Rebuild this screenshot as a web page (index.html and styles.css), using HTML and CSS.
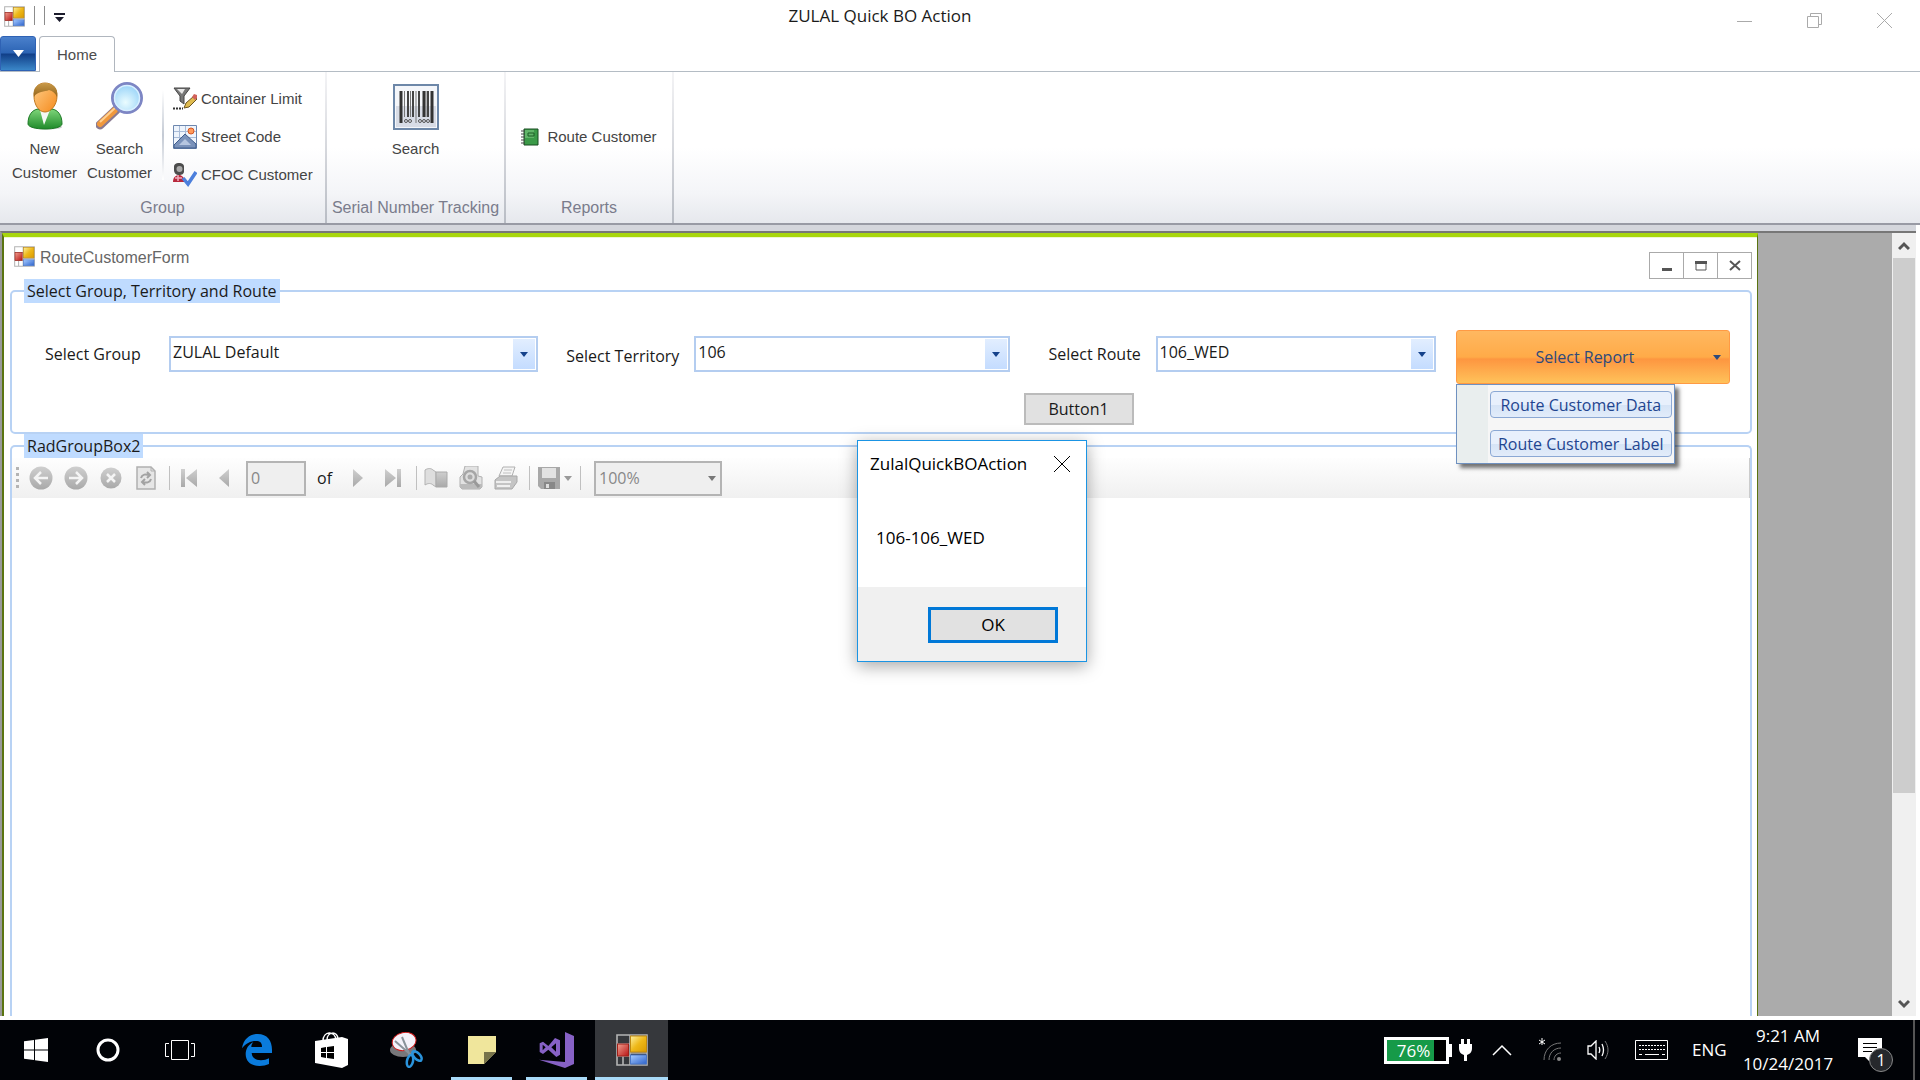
FILE: index.html
```html
<!DOCTYPE html>
<html lang="en">
<head>
<meta charset="utf-8">
<title>ZULAL Quick BO Action</title>
<link rel="stylesheet" href="styles.css">
</head>
<body>
<svg class="defs" width="0" height="0" aria-hidden="true">
  <defs>
    <linearGradient id="gold" x1="0" y1="0" x2="1" y2="1"><stop offset="0" stop-color="#fdf0a0"/><stop offset=".5" stop-color="#eeb818"/><stop offset="1" stop-color="#d99a00"/></linearGradient>
    <linearGradient id="ruby" x1="0" y1="0" x2="1" y2="1"><stop offset="0" stop-color="#f0a090"/><stop offset="1" stop-color="#b81414"/></linearGradient>
    <linearGradient id="azure" x1="0" y1="0" x2="1" y2="1"><stop offset="0" stop-color="#a8ccff"/><stop offset="1" stop-color="#2c62cc"/></linearGradient>
    <linearGradient id="grey" x1="0" y1="0" x2="0" y2="1"><stop offset="0" stop-color="#cfcfcf"/><stop offset="1" stop-color="#a9a9a9"/></linearGradient>
    <linearGradient id="face" x1="0" y1="0" x2="1" y2="1"><stop offset="0" stop-color="#ffcf8a"/><stop offset="1" stop-color="#f58a1c"/></linearGradient>
    <linearGradient id="hair" x1="0" y1="0" x2="0" y2="1"><stop offset="0" stop-color="#c99a4a"/><stop offset="1" stop-color="#94641a"/></linearGradient>
    <linearGradient id="shirt" x1="0" y1="0" x2="0" y2="1"><stop offset="0" stop-color="#7fd67a"/><stop offset="1" stop-color="#1f8a2a"/></linearGradient>
    <radialGradient id="glass" cx=".45" cy=".65" r=".6"><stop offset="0" stop-color="#eafcff"/><stop offset="1" stop-color="#9ad4f8"/></radialGradient>
    <symbol id="forms" viewBox="0 0 32 32">
      <path d="M1 1h30v30H1zM1 10h13M1 22h13M14 1v30M14 19h17M7 22v9" fill="none" stroke="#b4b4b4" stroke-width="1.6"/>
      <rect x="14.500" y="2" width="16" height="16" fill="url(#gold)" stroke="#c08a10"/>
      <rect x="1.500" y="10" width="11" height="12" fill="url(#ruby)" stroke="#a02018"/>
      <rect x="14.500" y="21" width="16" height="9" fill="url(#azure)" stroke="#4a78c8"/>
    </symbol>
    <symbol id="caret" viewBox="0 0 8 5"><path d="M0 0h8L4 5z" fill="currentColor"/></symbol>
  </defs>
</svg>

<div class="screen">
  <header class="titlebar">
    <div class="quick">
      <svg class="i20" aria-hidden="true"><use href="#forms"/></svg>
      <span class="bar"></span><span class="bar"></span>
      <button class="plain more" aria-label="Customize toolbar"><svg width="11" height="10" viewBox="0 0 11 10"><path d="M0 0h11v2H0zM1 4h9L5.500 9z" fill="#1c1c2c"/></svg></button>
    </div>
    <h1>ZULAL Quick BO Action</h1>
    <div class="winctl">
      <button class="plain" aria-label="Minimize"><svg width="16" height="16"><path d="M0 8.500h15" stroke="#aaa"/></svg></button>
      <button class="plain" aria-label="Restore"><svg width="16" height="16"><path d="M.5 3.500h11v11H.5zM3.500 3V.5h11v11H12" fill="none" stroke="#aaa"/></svg></button>
      <button class="plain" aria-label="Close"><svg width="16" height="16"><path d="M0 0l15 15M15 0L0 15" stroke="#aaa"/></svg></button>
    </div>
  </header>

  <nav class="tabs">
    <button class="appmenu" aria-label="Application menu"><svg width="11" height="7"><use href="#caret"/></svg></button>
    <button class="tab">Home</button>
  </nav>

  <section class="ribbon">
    <div class="rgroup main">
      <div class="rbody">
        <button class="big">
          <svg width="38" height="48" viewBox="0 0 38 48"><ellipse cx="21" cy="45" rx="15" ry="2.500" fill="#999" opacity=".5"/><path d="M2 42c0-9 4-14 10-15l7 4 7-4c6 1 10 6 10 15 0 3-8 5-17 5S2 45 2 42z" fill="url(#shirt)" stroke="#1d7a26"/><path d="M14 28l4 15 6-15z" fill="#f4f8f4"/><path d="M8 14C8 6 12 1 19 1s12 5 12 13c0 9-6 16-12 16S8 23 8 14z" fill="url(#face)" stroke="#c07820"/><path d="M8 15C6 6 12 1 19 1s14 4 12 14c-2-4-4-6-8-7-4 2-12 1-15 7z" fill="url(#hair)"/></svg>
          <span>New<br>Customer</span>
        </button>
        <button class="big">
          <svg width="48" height="48" viewBox="0 0 48 48"><path d="M20 28L4 43" stroke="#8a7a90" stroke-width="9" stroke-linecap="round"/><path d="M19 28L4 42" stroke="#f0983c" stroke-width="6" stroke-linecap="round"/><path d="M19 26L4 40" stroke="#ffd090" stroke-width="2"/><circle cx="31" cy="16" r="14.500" fill="url(#glass)" stroke="#7d86c4" stroke-width="3"/><circle cx="31" cy="16" r="12.500" fill="none" stroke="#d8efff" stroke-width="1.500"/></svg>
          <span>Search<br>Customer</span>
        </button>
        <span class="rsep"></span>
        <div class="smalls">
          <button class="small"><svg width="24" height="24" viewBox="0 0 24 24"><path d="M1 1h16l-6 8v8l-4-3V9z" fill="#777" stroke="#444"/><path d="M4 2h8L9 7z" fill="#e8e8e8"/><path d="M0 21.500h10" stroke="#333" stroke-width="2" stroke-dasharray="2 1"/><path d="M11 21l2-5 8-7 3 3-8 8z" fill="#e0bc50" stroke="#6b5320"/><path d="M19 10l2-3 3 1v3l-2 2z" fill="#d2625c"/></svg>Container Limit</button>
          <button class="small"><svg width="24" height="24" viewBox="0 0 24 24"><path d="M.5.500h23v23H.5z" fill="#eef4fc" stroke="#6d87ae"/><path d="M1 6.500h22M1 12.500h22M6.500 1v22M12.500 1v22" stroke="#a9bcd8"/><path d="M1 20l11-11 11 10v4H1z" fill="#7a92ba" stroke="#3f5c8c"/><path d="M6 20l6-6 6 6z" fill="#b6c6e0"/><circle cx="18" cy="6" r="3" fill="#ff9a5a" stroke="#d65522"/></svg>Street Code</button>
          <button class="small"><svg width="24" height="24" viewBox="0 0 24 24"><path d="M1 4c0-3 2-4 5-4s5 1 5 4v4c0 3-2 4-5 4S1 10 1 7z" fill="#4c4c4c"/><circle cx="6.500" cy="6" r="3" fill="#aaa"/><path d="M0 19c0-5 3-7 6-7s5 2 6 7z" fill="#b8283c"/><path d="M5 12v6M2 15h7" stroke="#eab" stroke-width="1.500"/><path d="M10 15l5 6L23 9" fill="none" stroke="#4c7fdc" stroke-width="3.500"/></svg>CFOC Customer</button>
        </div>
      </div>
      <div class="rlabel">Group</div>
    </div>
    <div class="rgroup serial">
      <div class="rbody">
        <button class="big">
          <svg width="46" height="46" viewBox="0 0 46 46"><rect x="1" y="1" width="44" height="44" fill="#f4f6fa" stroke="#6d87a8" stroke-width="2"/><path d="M3 22h40v21H3z" fill="#d8dce6"/><path d="M8 7v32M31 7v26M39 7v32" stroke="#333" stroke-width="3"/><path d="M15 7v26M20 7v26M26 7v26M35 7v26" stroke="#444" stroke-width="2"/><path d="M11.500 7v26M17.500 7v26M23 7v32M33 7v26" stroke="#777"/><g fill="none" stroke="#555"><circle cx="13" cy="37" r="1.500"/><circle cx="17" cy="37" r="1.500"/><circle cx="27" cy="37" r="1.500"/><circle cx="31" cy="37" r="1.500"/><circle cx="35" cy="37" r="1.500"/></g></svg>
          <span>Search</span>
        </button>
      </div>
      <div class="rlabel">Serial Number Tracking</div>
    </div>
    <div class="rgroup reports">
      <div class="rbody">
        <button class="small book"><svg width="18" height="18" viewBox="0 0 18 18"><path d="M3 1h14v16H3z" fill="#3b9a48" stroke="#184d20"/><path d="M4 2h9v8H4z" fill="#7cc880" opacity=".6"/><path d="M7 5h6v3H7z" fill="none" stroke="#1c5c26"/><path d="M0 3h4M0 6h4M0 9h4M0 12h4M0 15h4" stroke="#444"/></svg>Route Customer</button>
      </div>
      <div class="rlabel">Reports</div>
    </div>
  </section>

  <main class="mdi">
    <section class="form" aria-label="RouteCustomerForm">
      <header class="formbar">
        <svg class="i20" aria-hidden="true"><use href="#forms"/></svg>
        <h2>RouteCustomerForm</h2>
        <div class="formctl">
          <button aria-label="Minimize"><svg width="12" height="12"><path d="M1 8h10v3H1z" fill="#555"/></svg></button>
          <button aria-label="Maximize"><svg width="12" height="12"><path d="M1 2h10v8H1z" fill="none" stroke="#555"/><path d="M0 1h12v3H0z" fill="#555"/></svg></button>
          <button aria-label="Close"><svg width="12" height="12"><path d="M1 1l10 9M11 1L1 10" stroke="#555" stroke-width="2"/></svg></button>
        </div>
      </header>

      <fieldset class="box filters">
        <legend>Select Group, Territory and Route</legend>
        <div class="fields">
          <label for="group">Select Group</label>
          <div class="combo"><select id="group"><option>ZULAL Default</option></select><span class="drop"><svg width="8" height="5"><use href="#caret"/></svg></span></div>
          <label for="territory" class="lterr">Select Territory</label>
          <div class="combo"><select id="territory"><option>106</option></select><span class="drop"><svg width="8" height="5"><use href="#caret"/></svg></span></div>
          <label for="route" class="lroute">Select Route</label>
          <div class="combo"><select id="route"><option>106_WED</option></select><span class="drop"><svg width="8" height="5"><use href="#caret"/></svg></span></div>
          <div class="report">
            <button class="rbtn"><span>Select Report</span><svg width="8" height="5"><use href="#caret"/></svg></button>
            <div class="menu">
              <button>Route Customer Data</button>
              <button>Route Customer Label</button>
            </div>
          </div>
          <button class="button1">Button1</button>
        </div>
      </fieldset>

      <fieldset class="box viewer">
        <legend>RadGroupBox2</legend>
        <div class="toolbar">
          <span class="grip"></span>
          <button class="plain" disabled aria-label="Back"><svg width="24" height="24" viewBox="0 0 24 24"><circle cx="12" cy="12" r="11.500" fill="url(#grey)"/><path d="M19 12H7M12 6l-6 6 6 6" fill="none" stroke="#f4f4f4" stroke-width="2.500"/></svg></button>
          <button class="plain" disabled aria-label="Forward"><svg width="24" height="24" viewBox="0 0 24 24"><circle cx="12" cy="12" r="11.500" fill="url(#grey)"/><path d="M5 12h12M12 6l6 6-6 6" fill="none" stroke="#f4f4f4" stroke-width="2.500"/></svg></button>
          <button class="plain" disabled aria-label="Stop"><svg width="24" height="24" viewBox="0 0 24 24"><circle cx="12" cy="12" r="10.500" fill="url(#grey)"/><path d="M8 8l8 8M16 8l-8 8" stroke="#f4f4f4" stroke-width="2.500"/></svg></button>
          <button class="plain" disabled aria-label="Refresh"><svg width="24" height="24" viewBox="0 0 24 24"><path d="M3 1h14l4 4v18H3z" fill="#e6e6e6" stroke="#b0b0b0" stroke-width="1.500"/><path d="M17 1v4h4" fill="none" stroke="#b0b0b0"/><path d="M7 12c1-4 5-4 8-3M13 6l3 3-3 3M17 13c-1 4-5 4-8 3M11 13l-3 3 3 3" fill="none" stroke="#a2a2a2" stroke-width="2"/></svg></button>
          <span class="tsep"></span>
          <button class="plain" disabled aria-label="First page"><svg width="24" height="24" viewBox="0 0 24 24"><path d="M4 3h4v18H4zM20 3v18L9 12z" fill="url(#grey)"/></svg></button>
          <button class="plain" disabled aria-label="Previous page"><svg width="24" height="24" viewBox="0 0 24 24"><path d="M17 3v18L7 12z" fill="url(#grey)"/></svg></button>
          <input class="page" aria-label="Page" value="0" disabled>
          <span class="of">of</span>
          <button class="plain" disabled aria-label="Next page"><svg width="24" height="24" viewBox="0 0 24 24"><path d="M7 3v18l10-9z" fill="url(#grey)"/></svg></button>
          <button class="plain" disabled aria-label="Last page"><svg width="24" height="24" viewBox="0 0 24 24"><path d="M16 3h4v18h-4zM4 3v18l11-9z" fill="url(#grey)"/></svg></button>
          <span class="tsep"></span>
          <button class="plain" disabled aria-label="Document map"><svg width="24" height="24" viewBox="0 0 24 24"><path d="M1 4c3-2 6-2 8 0l3 2v15l-3-2c-2-2-5-2-8 0z" fill="#dedede" stroke="#b2b2b2"/><path d="M12 6h11v15H12z" fill="url(#grey)" stroke="#aaa"/></svg></button>
          <button class="plain" disabled aria-label="Print layout"><svg width="24" height="24" viewBox="0 0 24 24"><path d="M6 0h13v10l4 1v10l-2 2H3l-2-2V11l3-3z" fill="#e2e2e2" stroke="#b0b0b0"/><path d="M1 18h22v3l-2 2H3l-2-2z" fill="#bbb"/><circle cx="11" cy="11" r="6" fill="#ddd" stroke="#a6a6a6" stroke-width="2.500"/><circle cx="11" cy="11" r="2.500" fill="#aaa"/><path d="M15 15l5 6" stroke="#999" stroke-width="3"/></svg></button>
          <button class="plain" disabled aria-label="Print"><svg width="24" height="24" viewBox="0 0 24 24"><path d="M9 1h12l-3 9H5z" fill="#f4f4f4" stroke="#b0b0b0"/><path d="M10 4h8M9 7h8" stroke="#c0c0c0"/><path d="M1 14l5-4h17v6l-5 7H1z" fill="#c4c4c4" stroke="#a8a8a8"/><path d="M2 15h15v2H2z" fill="#eee"/><path d="M3 19h13v2H3z" fill="#f0f0f0"/></svg></button>
          <span class="tsep"></span>
          <button class="plain save" disabled aria-label="Export"><svg width="22" height="24" viewBox="0 0 22 24"><path d="M0 1h22v22H3l-3-3z" fill="#a8a8a8"/><path d="M4 2h14v10H4z" fill="#e2e2e2"/><path d="M6 16h11v7H6z" fill="#888"/><path d="M8 18h3v4H8z" fill="#ddd"/></svg><svg width="8" height="5"><use href="#caret"/></svg></button>
          <span class="tsep"></span>
          <div class="zoom"><select aria-label="Zoom" disabled><option>100%</option></select><svg width="8" height="5"><use href="#caret"/></svg></div>
        </div>
      </fieldset>
    </section>
    <div class="vscroll">
      <button class="plain" aria-label="Scroll up"><svg width="12" height="10"><path d="M1 8l5-5 5 5" fill="none" stroke="#555" stroke-width="3"/></svg></button>
      <div class="track"><div class="thumb"></div></div>
      <button class="plain" aria-label="Scroll down"><svg width="12" height="10"><path d="M1 2l5 5 5-5" fill="none" stroke="#555" stroke-width="3"/></svg></button>
    </div>
  </main>

  <footer class="taskbar">
    <div class="sys">
      <button class="plain" aria-label="Start"><svg width="24" height="24" viewBox="0 0 24 24"><path d="M0 3.300L10 2v9.500H0zM11 1.800L24 0v11.500H11zM0 12.500h10V22L0 20.700zM11 12.500h13V24l-13-1.800z" fill="#fff"/></svg></button>
      <button class="plain" aria-label="Cortana"><svg width="24" height="24"><circle cx="12" cy="12" r="10" fill="none" stroke="#fff" stroke-width="3"/></svg></button>
      <button class="plain" aria-label="Task view"><svg width="30" height="20"><path d="M6.500.500h17v19h-17zM4 3.500H.5v13H4M26 3.500h3.500v13H26" fill="none" stroke="#fff"/></svg></button>
    </div>
    <div class="apps">
      <button class="plain" aria-label="Edge"><svg width="30" height="32" viewBox="0 0 90 96"><path d="M0 43C4 15 24 0 47 0c29 0 43 20 43 47v10H29c1 15 13 22 28 22 9 0 17-2 24-6v17c-8 4-18 6-28 6-26 0-42-14-42-36 0-16 9-29 23-35-4 4-6 9-6 14h32c0-13-6-18-18-18C25 21 10 29 0 43z" fill="#0a7bdc"/></svg></button>
      <button class="plain" aria-label="Store"><svg width="33" height="36" viewBox="0 0 33 36"><path d="M8 9c0-10 12-11 13-1M12 8c0-9 11-9 11-1" fill="none" stroke="#fff" stroke-width="1.500"/><path d="M0 9l27-4 6 2v26l-6 3-27-5z" fill="#fff"/><path d="M6 16l5-1v5H6zM12 15l7-1v6h-7zM6 21h5v5l-5-1zM12 21h7v6l-7-1z" fill="#000"/></svg></button>
      <button class="plain" aria-label="Snipping Tool"><svg width="34" height="36" viewBox="0 0 34 36"><ellipse cx="13" cy="18" rx="13" ry="7" fill="#77777a"/><ellipse cx="14" cy="9.500" rx="12" ry="9" transform="rotate(-12 14 9)" fill="#f4f2fa" stroke="#d01c1c"/><path d="M5 9l16 14M12 5l8 19" stroke="#8a929a" stroke-width="2"/><g fill="none" stroke="#2a94dc" stroke-width="2.500"><ellipse cx="27" cy="24" rx="3" ry="6" transform="rotate(-45 27 24)"/><ellipse cx="20" cy="29" rx="3" ry="6" transform="rotate(12 20 29)"/></g></svg></button>
      <button class="plain open" aria-label="Sticky Notes"><svg width="28" height="28"><path d="M0 0h28v16L16 28H0z" fill="#f0e69c"/><path d="M16 28V16h12z" fill="#77734a"/></svg></button>
      <button class="plain open" aria-label="Visual Studio"><svg width="35" height="36" viewBox="0 0 105 108"><path d="M78 0l27 12v84l-27 12L0 83l78 7z" fill="#8661c5"/><path fill-rule="evenodd" d="M2 34l10-5 16 13 20-24 15 7v43l-11 7-24-22-16 13-10-6zM11 38v17l9-9zM51 34L37 46l14 13z" fill="#8661c5"/></svg></button>
      <button class="plain open active" aria-label="ZULAL Quick BO Action"><svg width="32" height="32"><use href="#forms"/></svg></button>
    </div>
    <div class="tray">
      <div class="battery"><span>76%</span></div>
      <svg class="plug" width="13" height="22" viewBox="0 0 13 22"><path d="M2 0h3v5h3V0h3v5h2v4c0 4-2 6-5 7v6H5v-6c-3-1-5-3-5-7V5h2z" fill="#fff"/></svg>
      <svg class="chev" width="20" height="12"><path d="M1 11l9-9 9 9" fill="none" stroke="#fff" stroke-width="1.500"/></svg>
      <svg class="wifi" width="24" height="24" viewBox="0 0 24 24"><path d="M4 0v7M1 2l6 4M7 2L1 6" stroke="#fff"/><g fill="none" stroke="#777"><path d="M6 22C6 12 13 5 23 5M11 22c0-7 5-12 12-12M16 22c0-4 3-7 7-7"/></g><circle cx="21" cy="21" r="2" fill="#888"/></svg>
      <svg class="vol" width="23" height="20" viewBox="0 0 23 20"><g fill="none" stroke="#fff" stroke-width="1.300"><path d="M1 6h3l5-5v18l-5-5H1zM12 7c1 2 1 4 0 6M15 4c2 4 2 8 0 12"/></g><path d="M18 1c4 6 4 12 0 18" fill="none" stroke="#777"/></svg>
      <svg class="kbd" width="33" height="20"><path d="M.5.500h32v19H.5z" fill="none" stroke="#fff"/><path d="M4 5.500h26M4 9.500h26" stroke="#fff" stroke-dasharray="2 1"/><path d="M4 14.500h3m3 0h14m3 0h3" stroke="#fff"/></svg>
      <span class="lang">ENG</span>
      <div class="clock"><span>9:21 AM</span><span>10/24/2017</span></div>
      <div class="notes"><svg width="24" height="24"><path d="M0 0h24v19H15l-4 4-4-4H0z" fill="#fff"/><path d="M5 5.500h14M5 9.500h14M5 13.500h9" stroke="#000"/></svg><span class="badge">1</span></div>
      <span class="peek"></span>
    </div>
  </footer>

  <div class="dialog" role="dialog" aria-labelledby="dlg">
    <header><h2 id="dlg">ZulalQuickBOAction</h2><button class="plain" aria-label="Close"><svg width="16" height="16"><path d="M0 0l16 16M16 0L0 16" stroke="#000"/></svg></button></header>
    <p>106-106_WED</p>
    <footer><button class="ok">OK</button></footer>
  </div>
</div>
</body>
</html>
```
FILE: styles.css
```css
* { box-sizing: border-box; }
body { margin: 0; background: #fff; color: #1a1a1a; font: 16px/20px "Open Sans", "Noto Sans", sans-serif; }
h1, h2, p, fieldset { margin: 0; padding: 0; font-weight: 400; }
button, input, select { font: inherit; color: inherit; margin: 0; padding: 0; border-radius: 0; }
svg { display: block; flex: none; }
.defs { position: absolute; }
.plain { display: flex; align-items: center; justify-content: center; border: 0; background: none; }
.i20 { width: 21px; height: 21px; }

.screen { display: flex; flex-direction: column; height: 100vh; position: relative; overflow: hidden; }

/* Title bar */
.titlebar { display: flex; height: 36px; flex: none; }
.quick { display: flex; align-items: flex-start; gap: 9px; width: 64px; padding: 6px 0 0 4px; }
.quick .bar { width: 1px; height: 19px; background: #8c8c8c; flex: none; }
.more { margin-top: 7px; }
.titlebar h1 { flex: 1; font-size: 17px; line-height: 32px; text-align: center; padding-right: 14px; }
.winctl { display: flex; }
.winctl button { width: 70px; height: 36px; padding-top: 6px; }

/* Ribbon */
.tabs { display: flex; align-items: flex-end; gap: 3px; height: 36px; flex: none; border-bottom: 1px solid #b4bcc4; font: 15px/20px "Liberation Sans", Arial, sans-serif; }
.appmenu { display: flex; align-items: center; justify-content: center; width: 36px; height: 35px; border: 1px solid #2f62b4; border-radius: 3px 3px 0 0; color: #fff; background: linear-gradient(#4a80cc, #2c64b4 48%, #113f88 52%, #3a86c8); }
.tab { width: 76px; height: 36px; margin-bottom: -1px; border: 1px solid #b0b6be; border-bottom: 0; border-radius: 4px 4px 0 0; background: #fff; color: #4c4c4c; }
.ribbon { display: flex; height: 153px; flex: none; border-bottom: 2px solid #989aa4; background: linear-gradient(#fff 50%, #f4f5f8 80%, #e6e8ed); font: 15px/24px "Liberation Sans", Arial, sans-serif; color: #444; }
.ribbon button { border: 0; background: none; }
.rgroup { display: flex; flex-direction: column; border-right: 2px solid; border-image: linear-gradient(#f4f4f6, #b8bcc4) 1; }
.main { width: 327px; }
.serial { width: 179px; }
.reports { width: 168px; }
.rbody { flex: 1; display: flex; justify-content: center; padding-top: 10px; }
.main .rbody { justify-content: flex-start; padding-left: 7px; }
.big { display: flex; flex-direction: column; align-items: center; width: 75px; height: 110px; gap: 7px; }
.serial .big { padding-top: 2px; width: auto; }
.rsep { width: 2px; height: 90px; margin: 8px 9px 0 5px; background: linear-gradient(#fff, #c4cad4, #fff); }
.smalls { display: flex; flex-direction: column; gap: 14px; padding-top: 5px; }
.small { display: flex; align-items: center; gap: 4px; height: 24px; white-space: nowrap; }
.book { gap: 8px; margin-top: 43px; }
.rlabel { height: 28px; text-align: center; color: #7a7c8c; font-size: 16px; line-height: 26px; white-space: nowrap; }

/* MDI client */
.mdi { flex: 1; min-height: 0; display: flex; margin: 6px 4px 4px 0; background: #ababab; border-top: 2px solid #777; border-left: 2px solid #999; box-shadow: 0 -6px 0 #d4d6dc; }
.form { flex: 1; min-width: 0; display: flex; flex-direction: column; margin-right: 134px; padding: 0 5px 0 6px; border: 1px solid #5a7410; border-top: 4px solid #a8d60c; border-bottom: 0; border-left: 2px solid #5a7410; background: #fff; box-shadow: inset 0 1px #eef6d0; }
.formbar { display: flex; gap: 5px; height: 42px; flex: none; padding: 9px 0 0 4px; font: 16px/23px "Liberation Sans", Arial, sans-serif; color: #666; }
.formbar h2 { font-size: 16px; line-height: 24px; flex: 1; }
.formctl { display: flex; margin-top: 6px; }
.formctl button { display: flex; align-items: center; justify-content: center; width: 35px; height: 27px; border: 1px solid #aaa; background: #fff; }
.formctl button + button { margin-left: -1px; }
.box { min-width: 0; border: 2px solid #b8d2f4; border-radius: 5px; }
.box legend { height: 24px; margin-left: 12px; padding: 0 3px; line-height: 24px; background: #bfdbff; }
.filters { height: 155px; flex: none; }
.viewer { flex: 1; border-bottom: 0; border-radius: 5px 5px 0 0; }

.fields { display: grid; grid-template-columns: 124px 369fr 156px 315fr 146px 280fr 294fr; grid-template-rows: 54px 32px; row-gap: 9px; align-items: center; padding: 27px 20px 0 33px; }
.fields label, .combo { margin-bottom: 6px; }
.lterr { padding: 4px 0 0 28px; }
.lroute { padding-left: 39px; }
.combo { position: relative; }
.combo select { display: block; appearance: none; width: 100%; height: 36px; border: 2px solid #b4cdf0; background: #fff; padding: 0 30px 5px 2px; opacity: 1; }
.drop { position: absolute; top: 3px; right: 3px; bottom: 3px; width: 22px; display: flex; align-items: center; justify-content: center; background: linear-gradient(#e2eeff, #c4dcff); color: #15428b; pointer-events: none; }
.report { position: relative; margin-left: 20px; }
.rbtn { display: flex; align-items: center; width: 100%; height: 54px; padding-right: 8px; border: 1px solid #ff9a44; border-radius: 3px; color: #2d4a7c; background: linear-gradient(#ffb860, #ffab48 50%, #fd9640 54%, #ffc25a); }
.rbtn span { flex: 1; text-align: center; }
.menu { position: absolute; top: 54px; left: 0; width: 219px; display: flex; flex-direction: column; gap: 12px; padding: 6px 2px 6px 33px; border: 1px solid #6f91c0; background: linear-gradient(90deg, #e9eeee 31px, #f6f6f6 31px); box-shadow: 4px 4px 4px rgba(0,0,0,.55); z-index: 1; }
.menu button { height: 27px; border: 1px solid #8ba8d4; border-radius: 4px; color: #1f4590; background: linear-gradient(#e8f0fc 50%, #d6e4f6 52%, #e2ecfa); white-space: nowrap; }
.button1 { grid-column: 5 / span 2; grid-row: 2; width: 110px; height: 32px; margin-left: 14px; border: 2px solid #bbb; background: #e1e1e1; }

/* Report viewer toolbar */
.toolbar { display: flex; align-items: center; height: 40px; padding-left: 4px; background: linear-gradient(#fefefe, #f0f0f0); border-right: 1px solid #ccc; color: #999; }
.toolbar button { width: 35px; height: 30px; }
.grip { width: 3px; height: 22px; background: repeating-linear-gradient(#b4b4b4 0 3px, transparent 3px 6px); margin-right: 4px; }
.tsep { width: 1px; height: 24px; margin: 0 1px 0 6px; background: #c0c0c0; }
.page { width: 60px; height: 35px; margin: 0 11px 0 5px; padding: 0 3px; border: 2px solid #b4b4b4; background: #efefef; color: #888; }
.of { width: 16px; margin-right: 7px; color: #1a1a1a; }
.toolbar .save { width: 35px; gap: 4px; margin: 0 2px 0 6px; }
.zoom { position: relative; margin-left: 12px; }
.zoom select { display: block; appearance: none; width: 128px; height: 35px; padding: 0 3px; border: 2px solid #b4b4b4; background: #efefef; color: #888; opacity: 1; }
.zoom svg { position: absolute; right: 6px; top: 15px; color: #777; }

.vscroll { display: flex; flex-direction: column; width: 24px; background: #f0f0f0; }
.vscroll button { height: 25px; flex: none; }
.track { flex: 1; padding: 0 1px; }
.thumb { height: 73%; background: #cdcdcd; }

/* Taskbar */
.taskbar { display: flex; height: 60px; flex: none; background: #010307; color: #fff; }
.sys, .apps { display: flex; }
.sys { margin-right: 3px; }
.sys button { width: 72px; }
.apps button { width: 75px; }
.open { background: linear-gradient(#a8daf8, #a8daf8) 7px 57px / 61px 3px no-repeat; }
.apps .active { width: 73px; margin: 0 1px; background: linear-gradient(#a8daf8, #a8daf8) 0 57px / 73px 3px no-repeat #36383c; }
.tray { display: flex; align-items: center; margin-left: auto; font-size: 17px; }
.battery { position: relative; width: 65px; height: 27px; border: 3px solid #fff; background: linear-gradient(90deg, #169a48 80%, #000 80%); text-align: center; line-height: 21px; padding-right: 6px; }
.battery::after { content: ""; position: absolute; right: -6px; top: 4px; width: 3px; height: 13px; background: #fff; }
.plug { margin-left: 10px; }
.chev { margin-left: 20px; }
.wifi { margin-left: 26px; }
.vol { margin-left: 25px; }
.kbd { margin-left: 25px; }
.lang { margin-left: 24px; width: 40px; }
.clock { display: flex; flex-direction: column; align-items: center; width: 112px; line-height: 28px; }
.notes { position: relative; width: 69px; padding-left: 14px; }
.badge { position: absolute; left: 25px; top: 10px; width: 24px; height: 24px; border: 1px solid #888; border-radius: 12px; background: #26282c; font-size: 16px; line-height: 22px; text-align: center; }
.peek { align-self: stretch; width: 7px; border-left: 2px solid #555; }

/* Message box */
.dialog { position: absolute; left: 857px; top: 440px; width: 230px; border: 1px solid #1a94e4; background: #fff; color: #000; box-shadow: 0 4px 16px rgba(0,0,0,.35); z-index: 2; font-size: 17px; }
.dialog header { display: flex; align-items: center; justify-content: space-between; height: 46px; padding: 0 16px 0 12px; }
.dialog h2 { font-size: 17px; line-height: 22px; white-space: nowrap; }
.dialog p { height: 100px; padding: 41px 18px 0; }
.dialog footer { display: flex; justify-content: flex-end; padding: 20px 28px 18px; background: #f0f0f0; }
.ok { width: 130px; height: 36px; border: 3px solid #0078d7; background: #e1e1e1; }
```
